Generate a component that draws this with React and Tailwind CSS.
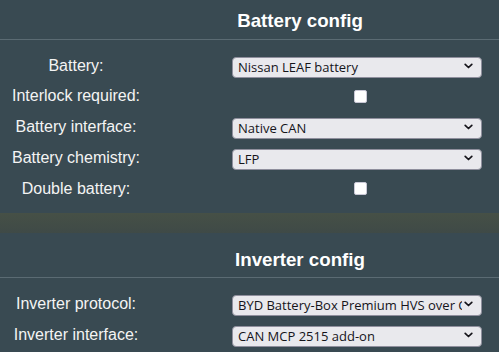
import React from 'react';

const Chevron = () => (
    <svg width="9" height="6" viewBox="0 0 9 6" className="pointer-events-none absolute right-[9px] top-1/2 -translate-y-1/2">
        <path d="M1.2 1.3 L4.5 4.5 L7.8 1.3" fill="none" stroke="#15141a" strokeWidth="1.7" strokeLinecap="round" strokeLinejoin="round" />
    </svg>
);

const Select = ({ value }) => (
    <div className="relative w-[250px] h-[21px]">
        <select
            defaultValue={value}
            className="appearance-none w-full h-full bg-[#e9e9ed] border border-[#8f8f9d] rounded-[4px] pl-[5px] pr-[19px] text-[13px] text-[#15141a] leading-[19px] overflow-hidden whitespace-nowrap"
            style={{ fontFamily: '"Open Sans", "Noto Sans", sans-serif' }}
        >
            <option>{value}</option>
        </select>
        <Chevron />
    </div>
);

const Check = () => (
    <div className="w-[250px] flex">
        <input
            type="checkbox"
            className="appearance-none ml-[122px] w-[13px] h-[13px] bg-white border border-[#c9c8d6] rounded-[2px]"
        />
    </div>
);

const Row = ({ label, h, children }) => (
    <div className={`flex items-center ${h}`}>
        <div className="w-[152px] text-center text-[16px] text-[#f4f4f4]">{label}</div>
        <div className="ml-[80px]">{children}</div>
    </div>
);

const App = () => {
    return (
        <div
            className="w-[499px] h-[352px] overflow-hidden bg-[#394a52]"
            style={{ fontFamily: '"Liberation Sans", Arial, sans-serif' }}
        >
            {/* Battery section */}
            <div className="pb-[9px]">
                <div className="h-[40px] pt-[10px] pl-[101px] text-center border-b border-[#5b6b73]">
                    <h3 className="text-[18.72px] leading-[21px] font-bold text-white">Battery config</h3>
                </div>
                <div className="pt-[10px]">
                    <Row label="Battery:" h="h-[31px]"><Select value="Nissan LEAF battery" /></Row>
                    <Row label="Interlock required:" h="h-[30px]"><Check /></Row>
                    <Row label="Battery interface:" h="h-[31px]"><Select value="Native CAN" /></Row>
                    <Row label="Battery chemistry:" h="h-[31px]"><Select value="LFP" /></Row>
                    <Row label="Double battery:" h="h-[31px]"><Check /></Row>
                </div>
            </div>

            {/* spacer band between sections */}
            <div className="h-[20px] bg-gradient-to-b from-[#465046] to-[#3f4a47]" />

            {/* Inverter section */}
            <div>
                <div className="h-[45px] pt-[16px] pl-[101px] text-center border-b border-[#5b6b73]">
                    <h3 className="text-[18.72px] leading-[21px] font-bold text-white">Inverter config</h3>
                </div>
                <div className="pt-[10px]">
                    <Row label="Inverter protocol:" h="h-[31px]"><Select value="BYD Battery-Box Premium HVS over CAN Bus" /></Row>
                    <Row label="Inverter interface:" h="h-[31px]"><Select value="CAN MCP 2515 add-on" /></Row>
                </div>
            </div>
        </div>
    );
};

export default App;
